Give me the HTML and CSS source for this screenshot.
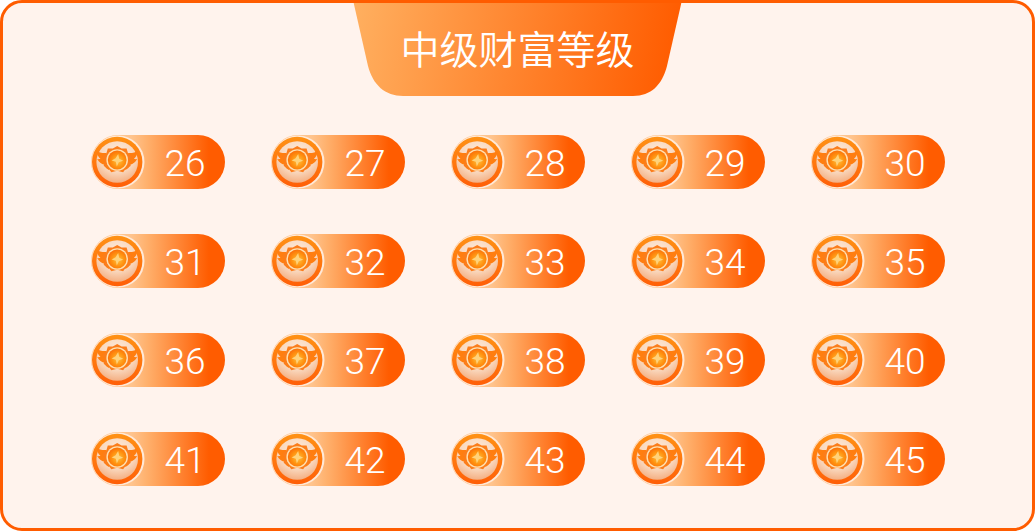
FILE: index.html
```html
<!DOCTYPE html>
<html lang="zh">
<head>
<meta charset="utf-8">
<title>中级财富等级</title>
<link rel="stylesheet" href="styles.css">
</head>
<body>
<svg class="defs" width="0" height="0" aria-hidden="true">
  <defs>
    <radialGradient id="face" cx="50%" cy="30%" r="75%">
      <stop offset="0" stop-color="#fdeadb"/>
      <stop offset="0.6" stop-color="#f9d6bb"/>
      <stop offset="1" stop-color="#f3a878"/>
    </radialGradient>
    <linearGradient id="rim" x1="0" y1="0" x2="0" y2="1">
      <stop offset="0" stop-color="#ff9215"/>
      <stop offset="1" stop-color="#ff5f08"/>
    </linearGradient>
    <radialGradient id="gem" cx="55%" cy="55%" r="60%">
      <stop offset="0" stop-color="#ffc040"/>
      <stop offset="0.55" stop-color="#ff9210"/>
      <stop offset="1" stop-color="#fa6a08"/>
    </radialGradient>
    <symbol id="badge" viewBox="0 0 54 54">
      <circle cx="27" cy="27" r="26.500" fill="#ffe9d8"/>
      <circle cx="26.200" cy="27" r="25.200" fill="url(#rim)"/>
      <circle cx="26.200" cy="27" r="20.800" fill="url(#face)"/>
      <path d="M15 18c-4 .2-7-.6-9.500-2 .6 3.600 2 6.200 4 7.800-1.300.4-2.300.4-3.200.2 1.700 3.200 4 5.200 7 5.800.6 2.400 2.400 4.200 4.700 5.200l3-9z" fill="#ff7e10"/>
      <path d="M37.400 18c4 .2 7-.6 9.500-2-.6 3.600-2 6.200-4 7.800 1.300.4 2.300.4 3.200.2-1.700 3.200-4 5.200-7 5.800-.6 2.400-2.400 4.200-4.700 5.200l-3-9z" fill="#ff7e10"/>
      <path d="M26.200 11l4.400 2.600 5-.2 1.400 4.800 3.500 3.500-1.900 4.500 1.100 4.900-4.600 2.100-3 4-5.900-1.400-5.900 1.400-3-4-4.600-2.100 1.100-4.900-1.900-4.500 3.500-3.500 1.400-4.800 5 .2z" fill="#fb7d1c"/>
      <circle cx="26.200" cy="25" r="10.800" fill="#ffe0b0"/>
      <circle cx="26.200" cy="25" r="9.400" fill="url(#gem)"/>
      <path d="M27.200 19l1 4.800 4 2-4.400 1.400-2 4.200-1-4.600-4.200-1.300 4-2.300z" fill="#ffd27a"/>
    </symbol>
  </defs>
</svg>
<main class="card">
  <h1 class="tab">中级财富等级</h1>
  <ul class="grid">
    <li class="pill"><svg class="badge"><use href="#badge"/></svg><span class="num">26</span></li>
    <li class="pill"><svg class="badge"><use href="#badge"/></svg><span class="num">27</span></li>
    <li class="pill"><svg class="badge"><use href="#badge"/></svg><span class="num">28</span></li>
    <li class="pill"><svg class="badge"><use href="#badge"/></svg><span class="num">29</span></li>
    <li class="pill"><svg class="badge"><use href="#badge"/></svg><span class="num">30</span></li>
    <li class="pill"><svg class="badge"><use href="#badge"/></svg><span class="num">31</span></li>
    <li class="pill"><svg class="badge"><use href="#badge"/></svg><span class="num">32</span></li>
    <li class="pill"><svg class="badge"><use href="#badge"/></svg><span class="num">33</span></li>
    <li class="pill"><svg class="badge"><use href="#badge"/></svg><span class="num">34</span></li>
    <li class="pill"><svg class="badge"><use href="#badge"/></svg><span class="num">35</span></li>
    <li class="pill"><svg class="badge"><use href="#badge"/></svg><span class="num">36</span></li>
    <li class="pill"><svg class="badge"><use href="#badge"/></svg><span class="num">37</span></li>
    <li class="pill"><svg class="badge"><use href="#badge"/></svg><span class="num">38</span></li>
    <li class="pill"><svg class="badge"><use href="#badge"/></svg><span class="num">39</span></li>
    <li class="pill"><svg class="badge"><use href="#badge"/></svg><span class="num">40</span></li>
    <li class="pill"><svg class="badge"><use href="#badge"/></svg><span class="num">41</span></li>
    <li class="pill"><svg class="badge"><use href="#badge"/></svg><span class="num">42</span></li>
    <li class="pill"><svg class="badge"><use href="#badge"/></svg><span class="num">43</span></li>
    <li class="pill"><svg class="badge"><use href="#badge"/></svg><span class="num">44</span></li>
    <li class="pill"><svg class="badge"><use href="#badge"/></svg><span class="num">45</span></li>
  </ul>
</main>
</body>
</html>
```
FILE: styles.css
```css
* { box-sizing: border-box; }

html, body {
  margin: 0;
  padding: 0;
  background: #fff;
}

.defs { display: block; height: 0; }

.card {
  width: 1035px;
  height: 531px;
  background: #fff3ed;
  border: 3px solid #ff5c00;
  border-radius: 22px;
  overflow: hidden;
}

.tab {
  width: 329px;
  height: 96px;
  margin: -3px auto 0;
  padding-bottom: 2px;
  display: flex;
  align-items: center;
  justify-content: center;
  background: linear-gradient(100deg, #ffb060 0%, #ff5c00 96%);
  clip-path: path("M0 0H329L314 66C309 85 298 96 280 96H50C32 96 20 85 15 66Z");
  color: #fff;
  font: 350 39px "Noto Sans CJK SC", sans-serif;
}

.grid {
  list-style: none;
  margin: 39px 0 0;
  padding: 0 0 0 88px;
  display: grid;
  grid-template-columns: repeat(5, 134px);
  grid-auto-rows: 54px;
  column-gap: 46px;
  row-gap: 45px;
}

.pill {
  display: flex;
  align-items: center;
  height: 54px;
  border-radius: 27px;
  background: linear-gradient(90deg, #ffc48e 30%, #ffb06c 42%, #ff5c00 88%);
  color: #fff;
}

.badge {
  width: 54px;
  height: 54px;
  flex: none;
  filter: blur(.35px);
}

.num {
  flex: 1;
  padding-top: 3px;
  text-align: center;
  font: 300 37px "Roboto", "Liberation Sans", sans-serif;
}
```
